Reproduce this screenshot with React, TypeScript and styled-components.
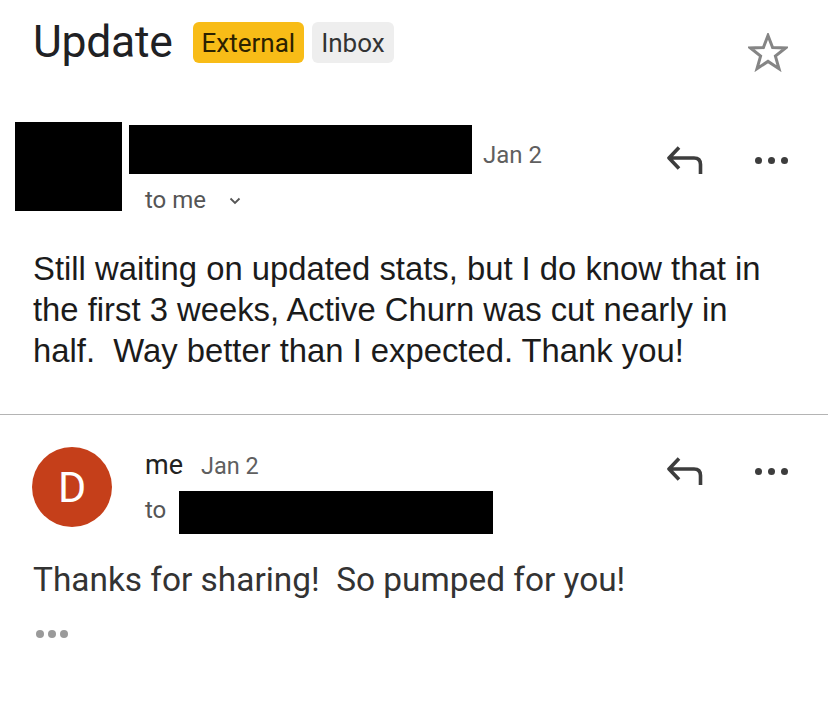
import React from "react";
import styled, { createGlobalStyle } from "styled-components";

const Global = createGlobalStyle`
  html, body { margin: 0; padding: 0; background: #ffffff; }
  body { font-family: Roboto, "Noto Sans", sans-serif; }
  #root { width: 828px; }
`;

const Page = styled.div`
  width: 828px;
  height: 714px;
  background: #fff;
  overflow: hidden;
`;

const Header = styled.div`
  display: flex;
  align-items: flex-start;
  height: 72px;
  padding: 22px 40px 0 33px;
  box-sizing: border-box;
`;

const Title = styled.h1`
  margin: 0;
  font-family: Roboto, sans-serif;
  font-weight: 400;
  font-size: 44.5px;
  line-height: 41px;
  color: #202124;
  letter-spacing: -0.3px;
`;

const Badge = styled.span<{ $tone: "yellow" | "grey" }>`
  display: inline-flex;
  align-items: center;
  height: 41px;
  padding: 0 9px;
  border-radius: 6px;
  margin-left: ${(p) => (p.$tone === "yellow" ? "20px" : "8px")};
  background: ${(p) => (p.$tone === "yellow" ? "#f8bc17" : "#eeeeee")};
  color: ${(p) => (p.$tone === "yellow" ? "#2b2100" : "#333333")};
  font-family: Roboto, sans-serif;
  font-size: 26px;
  box-sizing: border-box;
`;

const StarButton = styled.div`
  margin-left: auto;
  margin-top: 11px;
  width: 40px;
  height: 39px;
`;

const MessageHead = styled.div<{ $top: number }>`
  display: flex;
  align-items: flex-start;
  margin-top: ${(p) => p.$top}px;
  padding-right: 40px;
`;

const RedactedAvatar = styled.div`
  width: 107px;
  height: 89px;
  margin-left: 15px;
  background: #000;
  flex: none;
`;

const CircleAvatar = styled.div`
  width: 80px;
  height: 80px;
  margin-left: 32px;
  border-radius: 50%;
  background: #c53f1a;
  color: #fff;
  display: flex;
  align-items: center;
  justify-content: center;
  font-family: Roboto, sans-serif;
  font-size: 43px;
  flex: none;
`;

const Meta = styled.div<{ $left: number; $top: number }>`
  display: flex;
  flex-direction: column;
  margin-left: ${(p) => p.$left}px;
  margin-top: ${(p) => p.$top}px;
`;

const NameRow = styled.div`
  display: flex;
  align-items: flex-start;
`;

const Redaction = styled.div<{ $w: number; $h: number; $ml?: number; $mt?: number }>`
  width: ${(p) => p.$w}px;
  height: ${(p) => p.$h}px;
  margin-left: ${(p) => p.$ml ?? 0}px;
  margin-top: ${(p) => p.$mt ?? 0}px;
  background: #000;
  flex: none;
`;

const DateText = styled.span<{ $ml: number; $mt?: number; $size: number }>`
  font-family: Roboto, sans-serif;
  font-size: ${(p) => p.$size}px;
  line-height: 28px;
  color: #5f5f5f;
  margin-left: ${(p) => p.$ml}px;
  margin-top: ${(p) => p.$mt ?? 0}px;
`;

const Recipient = styled.div<{ $ml: number; $mt: number }>`
  display: flex;
  align-items: center;
  margin-left: ${(p) => p.$ml}px;
  margin-top: ${(p) => p.$mt}px;
  font-family: Roboto, sans-serif;
  font-size: 24px;
  line-height: 28px;
  color: #555;
`;

const SenderLine = styled.div`
  display: flex;
  align-items: baseline;
  font-family: Roboto, sans-serif;
`;

const Sender = styled.span`
  font-size: 27px;
  line-height: 30px;
  color: #222;
`;

const ToRow = styled.div`
  display: flex;
  align-items: flex-start;
  font-family: Roboto, sans-serif;
`;

const ToLabel = styled.span`
  font-size: 24px;
  line-height: 28px;
  color: #555;
  margin-top: 16px;
`;

const Actions = styled.div<{ $top: number }>`
  margin-left: auto;
  margin-top: ${(p) => p.$top}px;
  display: flex;
  align-items: flex-start;
`;

const Dots = styled.div<{ $size: number; $gap: number; $color: string; $mt?: number; $ml?: number }>`
  display: flex;
  gap: ${(p) => p.$gap}px;
  margin-top: ${(p) => p.$mt ?? 0}px;
  margin-left: ${(p) => p.$ml ?? 0}px;
  span {
    width: ${(p) => p.$size}px;
    height: ${(p) => p.$size}px;
    border-radius: 50%;
    background: ${(p) => p.$color};
  }
`;

const BodyText = styled.p<{ $font: string; $size: number; $lh: number; $color: string; $mt: number }>`
  margin: ${(p) => p.$mt}px 0 0 33px;
  font-family: ${(p) => p.$font};
  font-size: ${(p) => p.$size}px;
  line-height: ${(p) => p.$lh}px;
  color: ${(p) => p.$color};
  white-space: pre-wrap;
`;

const Divider = styled.hr`
  margin: 43px 0 0 0;
  border: 0;
  border-top: 1px solid #b4b4b4;
  height: 0;
`;

const ReplyIcon = () => (
  <svg width="36" height="28" viewBox="0 0 36 28" fill="none">
    <path
      d="M12 1.5 L2 12 L12 22.5 M2 12 H27 Q33.5 12 33.5 18.5 V28"
      stroke="#3d3d3d"
      strokeWidth="3.6"
      strokeLinejoin="round"
    />
  </svg>
);

const Chevron = () => (
  <svg width="12" height="8" viewBox="0 0 12 8" fill="none" style={{ marginLeft: 23, marginTop: 2 }}>
    <path d="M1.5 1.5 L6 6 L10.5 1.5" stroke="#555" strokeWidth="1.8" />
  </svg>
);

const Star = () => (
  <svg width="40" height="39" viewBox="0 0 40 39" fill="none">
    <path
      d="M20 2.5 L24.6 14.6 L37.5 15 L27.4 23.1 L31 35.7 L20 28.4 L9 35.7 L12.6 23.1 L2.5 15 L15.4 14.6 Z"
      stroke="#858585"
      strokeWidth="3"
      strokeLinejoin="miter"
    />
  </svg>
);

const MoreDots = () => (
  <Dots $size={7} $gap={6} $color="#3d3d3d" $mt={11} $ml={52}>
    <span />
    <span />
    <span />
  </Dots>
);

export default function App() {
  return (
    <Page>
      <Global />
      <Header>
        <Title>Update</Title>
        <Badge $tone="yellow">External</Badge>
        <Badge $tone="grey">Inbox</Badge>
        <StarButton>
          <Star />
        </StarButton>
      </Header>

      <MessageHead $top={50}>
        <RedactedAvatar />
        <Meta $left={7} $top={3}>
          <NameRow>
            <Redaction $w={343} $h={49} />
            <DateText $ml={11} $mt={16} $size={24}>Jan 2</DateText>
          </NameRow>
          <Recipient $ml={16} $mt={12}>
            to me
            <Chevron />
          </Recipient>
        </Meta>
        <Actions $top={24}>
          <ReplyIcon />
          <MoreDots />
        </Actions>
      </MessageHead>

      <BodyText $font={'"Liberation Sans", Arial, sans-serif'} $size={32.8} $lh={41} $color="#1b1b1b" $mt={34}>
        {"Still waiting on updated stats, but I do know that in\nthe first 3 weeks, Active Churn was cut nearly in\nhalf.  Way better than I expected. Thank you!"}
      </BodyText>

      <Divider />

      <MessageHead $top={32}>
        <CircleAvatar>D</CircleAvatar>
        <Meta $left={33} $top={3}>
          <SenderLine>
            <Sender>me</Sender>
            <DateText $ml={18} $size={23.5}>Jan 2</DateText>
          </SenderLine>
          <ToRow>
            <ToLabel>to</ToLabel>
            <Redaction $w={314} $h={43} $ml={13} $mt={11} />
          </ToRow>
        </Meta>
        <Actions $top={10}>
          <ReplyIcon />
          <MoreDots />
        </Actions>
      </MessageHead>

      <BodyText $font={"Roboto, sans-serif"} $size={33.4} $lh={38} $color="#333" $mt={27}>
        {"Thanks for sharing!  So pumped for you!"}
      </BodyText>

      <Dots $size={8} $gap={4} $color="#9a9a9a" $mt={31} $ml={36}>
        <span />
        <span />
        <span />
      </Dots>
    </Page>
  );
}
